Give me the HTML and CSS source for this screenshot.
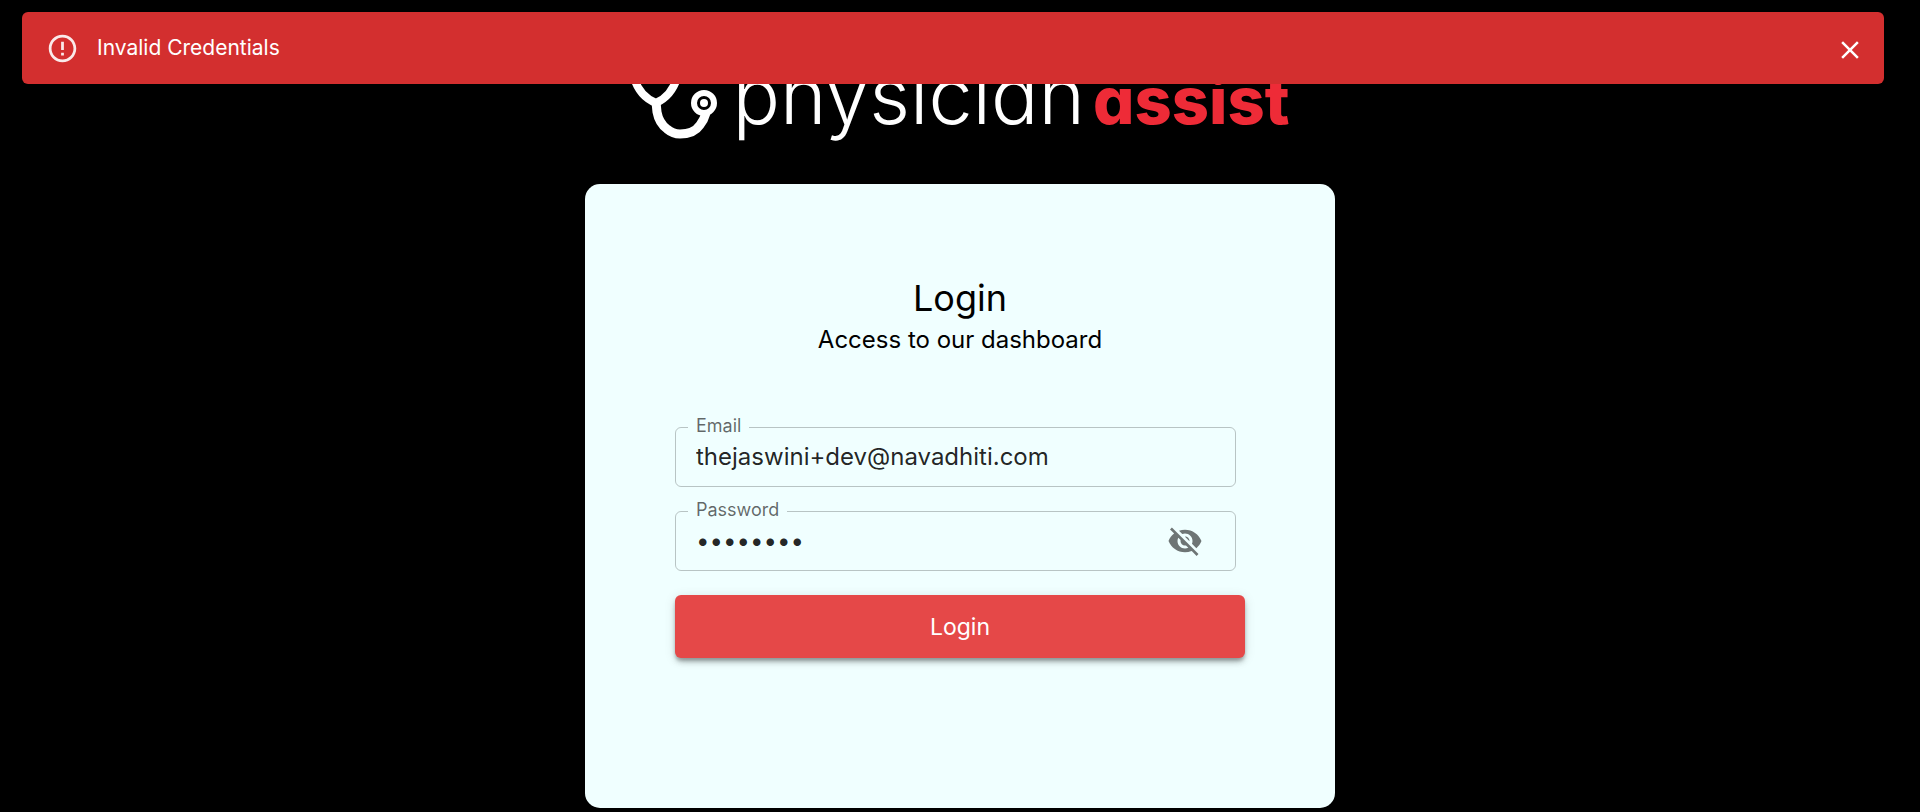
FILE: index.html
```html
<!DOCTYPE html>
<html lang="en">
<head>
<meta charset="utf-8">
<meta name="viewport" content="width=device-width, initial-scale=1">
<title>Physician Assist - Login</title>
<link rel="stylesheet" href="styles.css">
</head>
<body>
<div class="alert" role="alert">
  <svg class="alert-icon" viewBox="0 0 24 24" aria-hidden="true"><path d="M11 15h2v2h-2zm0-8h2v6h-2zm.99-5C6.47 2 2 6.48 2 12s4.47 10 9.99 10C17.52 22 22 17.52 22 12S17.52 2 11.99 2zM12 20c-4.42 0-8-3.58-8-8s3.58-8 8-8 8 3.58 8 8-3.58 8-8 8z"/></svg>
  <span class="alert-text">Invalid Credentials</span>
  <button class="alert-close" type="button" aria-label="Close">
    <svg viewBox="0 0 24 24" aria-hidden="true"><path d="M19 6.41L17.59 5 12 10.59 6.41 5 5 6.41 10.59 12 5 17.59 6.41 19 12 13.41 17.59 19 19 17.59 13.41 12z"/></svg>
  </button>
</div>
<main class="page">
  <div class="logo">
    <svg class="logo-mark" viewBox="0 0 88 104" aria-hidden="true">
      <path class="tube" d="M8 6C-4 30 4 58 26 67C46 58 56 30 44 6"/>
      <path class="stem" d="M26 66L27 76Q29 87 37 93Q43 98 50 98Q64 98 70 89Q74 84 76 77"/>
      <circle class="ring" cx="74" cy="67" r="10"/>
      <circle class="dot" cx="74" cy="67" r="4"/>
    </svg>
    <div class="wordmark">physician<span class="wordmark-strong">assist</span></div>
  </div>
  <section class="card">
    <h1 class="title">Login</h1>
    <p class="subtitle">Access to our dashboard</p>
    <form class="form">
      <fieldset class="field">
        <legend class="legend"><label for="email">Email</label></legend>
        <div class="control"><input class="input" id="email" type="email" value="thejaswini+dev@navadhiti.com"></div>
      </fieldset>
      <fieldset class="field">
        <legend class="legend"><label for="password">Password</label></legend>
        <div class="control">
          <input class="input" id="password" type="password" value="password">
          <button class="toggle" type="button" aria-label="Show password">
            <svg viewBox="0 0 24 24" aria-hidden="true"><path d="M12 7c2.76 0 5 2.24 5 5 0 .65-.13 1.26-.36 1.83l2.92 2.92c1.51-1.26 2.7-2.89 3.43-4.75-1.73-4.39-6-7.5-11-7.5-1.4 0-2.74.25-3.98.7l2.16 2.16C10.74 7.13 11.35 7 12 7zM2 4.27l2.28 2.28.46.46C3.08 8.3 1.78 10.02 1 12c1.73 4.39 6 7.5 11 7.5 1.55 0 3.03-.3 4.38-.84l.42.42L19.73 22 21 20.73 3.27 3 2 4.27zM7.53 9.8l1.55 1.55c-.05.21-.08.43-.08.65 0 1.66 1.34 3 3 3 .22 0 .44-.03.65-.08l1.55 1.55c-.67.33-1.41.53-2.2.53-2.76 0-5-2.24-5-5 0-.79.2-1.53.53-2.2zm4.31-.78l3.15 3.15.02-.16c0-1.66-1.34-3-3-3l-.17.01z"/></svg>
          </button>
        </div>
      </fieldset>
      <button class="submit" type="submit">Login</button>
    </form>
  </section>
</main>
</body>
</html>
```
FILE: styles.css
```css
* { box-sizing: border-box; }

body {
  margin: 0;
  min-height: 100vh;
  background: #000;
  color: #000;
  font-family: Inter, "Liberation Sans", sans-serif;
}

button { padding: 0; border: 0; background: none; font: inherit; cursor: pointer; }
button svg { display: block; fill: currentColor; }

.alert {
  position: fixed;
  z-index: 10;
  top: 12px;
  left: 22px;
  right: 36px;
  display: flex;
  align-items: center;
  min-height: 72px;
  padding: 0 19px 0 24px;
  border-radius: 6px;
  background: #d32f2f;
  color: #fff;
}
.alert-icon { flex: none; width: 33px; height: 33px; margin-right: 18px; fill: currentColor; opacity: .9; }
.alert-text { flex: 1; font-size: 21px; line-height: 30px; }
.alert-close { margin-top: 4px; color: #fff; }
.alert-close svg { width: 30px; height: 30px; }

.page {
  display: flex;
  flex-direction: column;
  align-items: center;
  gap: 44px;
  padding: 36px 24px 4px;
}

.logo { display: flex; height: 104px; }
.logo-mark { width: 88px; height: 104px; margin-right: 14px; fill: none; stroke: #fff; }
.tube { stroke-width: 8; }
.stem { stroke-width: 9; }
.ring { stroke-width: 6; }
.dot { fill: #fff; stroke: none; }
.wordmark {
  color: #fff;
  font-size: 79px;
  font-weight: 300;
  line-height: 118px;
  font-feature-settings: "cv11";
}
.wordmark-strong { margin-left: 8px; color: #ee2b37; font-size: 65px; font-weight: 800; }

.card {
  width: 100%;
  max-width: 750px;
  padding: 92px 90px 150px;
  border-radius: 15px;
  background: azure;
}
.title { margin: 0; text-align: center; font-size: 36px; font-weight: 400; line-height: 44px; }
.subtitle { margin: 0; text-align: center; font-size: 24px; line-height: 40px; }

.form { display: flex; flex-direction: column; gap: 13px; margin-top: 56px; }
.field {
  min-width: 0;
  margin: 0 9px 0 0;
  padding: 0;
  border: 1px solid rgba(0, 0, 0, .23);
  border-radius: 6px;
}
.legend {
  margin-left: 12px;
  padding: 0 8px;
  color: rgba(0, 0, 0, .6);
  font-size: 18px;
  line-height: 22px;
}
.legend label { display: block; height: 22px; line-height: 20px; }
.control { display: flex; align-items: center; height: 58px; margin-top: -10px; padding: 0 32px 0 20px; }
.input {
  flex: 1;
  min-width: 0;
  padding: 0;
  border: 0;
  outline: 0;
  background: none;
  color: rgba(0, 0, 0, .87);
  font: inherit;
  font-size: 24px;
  line-height: 36px;
}
.toggle { color: rgba(0, 0, 0, .54); }
.toggle svg { width: 36px; height: 36px; }
.submit {
  margin-top: 11px;
  min-height: 63px;
  border-radius: 6px;
  background: #e54848;
  color: #fff;
  font-size: 23px;
  box-shadow: 0 5px 6px -2px rgba(0, 0, 0, .3), 0 3px 3px rgba(0, 0, 0, .14), 0 2px 12px rgba(0, 0, 0, .12);
}
```
